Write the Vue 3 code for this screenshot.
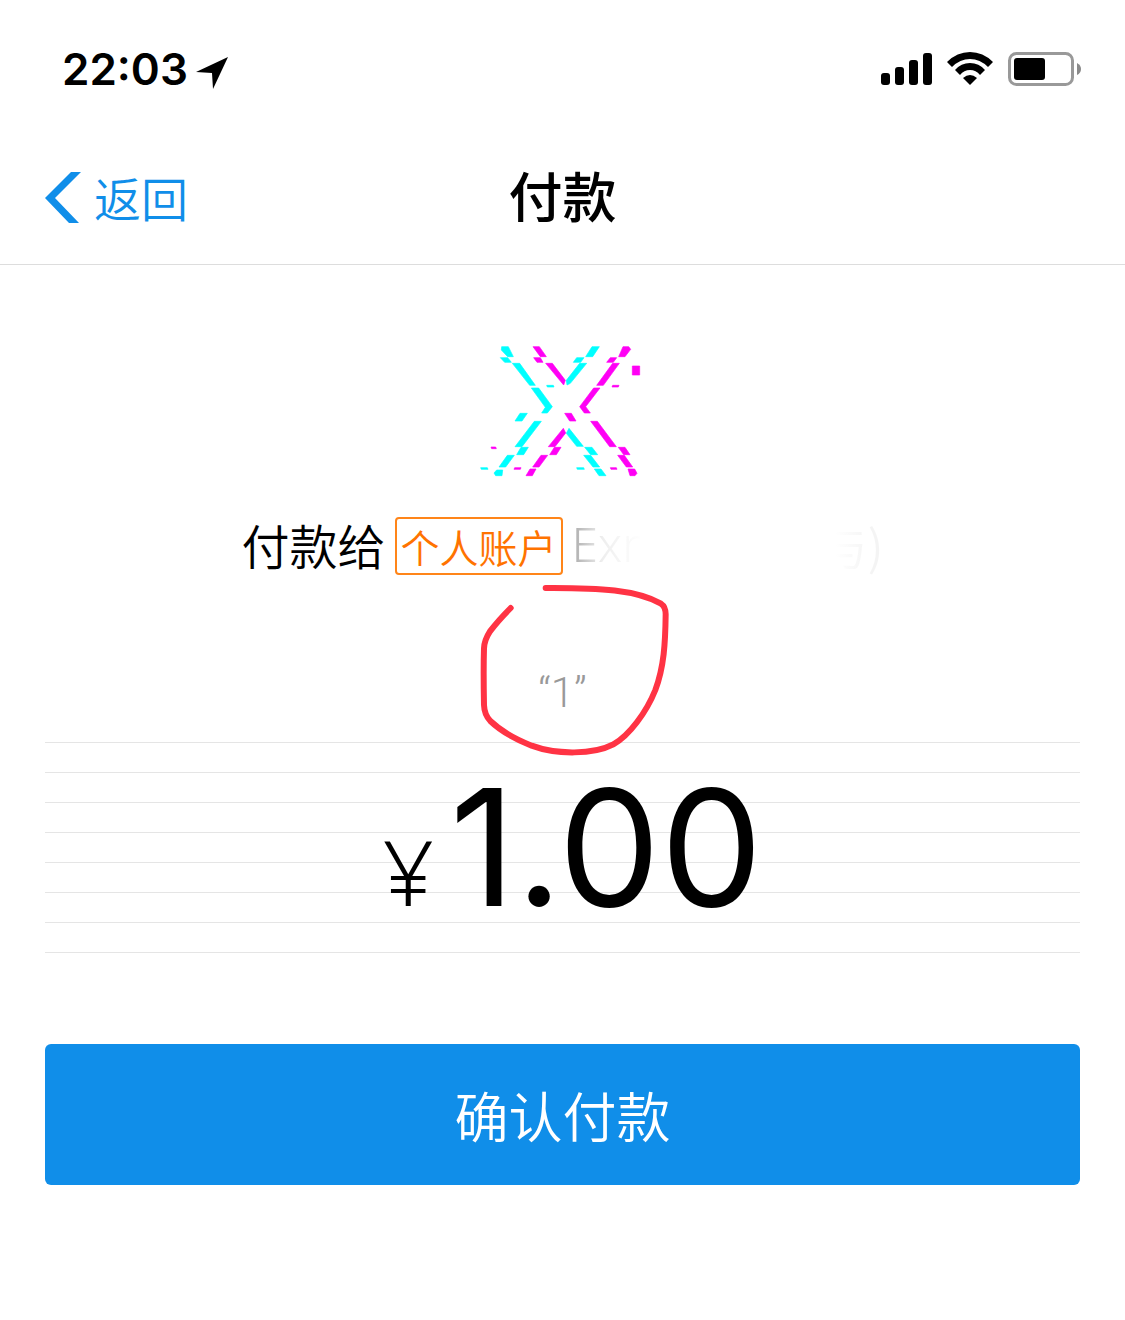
<script setup>
const cyan = [
  '95,50 115,50 130,80 113,80 94,60',
  '91,83 113,83 124,97 104,97',
  '127,100 149,100 196,166 179,166',
  '184,174 206,174 247,230 232,249 215,249 226,232',
  '366,50 388,50 368,80 347,80',
  '320,83 342,83 332,97 310,97',
  '329,100 350,100 301,160 291,165 289,151',
  '230,166 250,166 252,171 232,171',
  '150,250 172,250 156,273 135,273',
  '193,274 214,274 156,350 135,350',
  '153,352 175,352 161,374 140,374',
  '112,376 133,376 107,411 87,411',
  '80,420 98,420 96,437 77,437 72,429',
  '32,413 52,413 54,418 34,418',
  '289,310 297,295 340,349 320,349',
  '344,352 366,352 383,374 362,374',
  '341,376 362,376 389,411 369,411',
  '373,417 393,417 408,437 387,437',
  '320,413 341,413 343,418 322,418'
]
const magenta = [
  '189,50 208,50 229,80 211,80',
  '191,83 211,83 219,97 201,97',
  '227,100 247,100 286,151 281,165',
  '459,50 476,50 482,58 465,80 446,80',
  '421,83 440,83 430,97 410,97',
  '428,100 448,100 400,166 380,166',
  '428,166 447,166 445,171 426,171',
  '371,174 390,174 347,230 361,249 343,249 329,230',
  '487,108 509,108 509,135 487,135',
  '284,250 304,250 318,273 299,273',
  '362,274 382,274 439,350 419,350',
  '445,352 465,352 480,374 461,374',
  '443,376 463,376 488,411 469,411',
  '474,417 494,417 501,430 495,437 480,437',
  '63,351 77,351 79,356 65,356',
  '280,295 287,309 255,350 235,350',
  '253,352 273,352 259,374 239,374',
  '213,376 233,376 207,411 188,411',
  '180,417 198,417 187,437 168,437',
  '134,413 153,413 151,418 132,418',
  '421,413 439,413 441,418 423,418'
]
</script>

<template>
  <div class="page">
    <div class="status">
      <div class="clock">
        <span>22:03</span>
        <svg width="32" height="32" viewBox="0 0 32 32"><path d="M32 0 17 32 16 16 0 15Z" /></svg>
      </div>
      <div class="signals">
        <svg width="52" height="34" viewBox="0 0 52 34">
          <rect x="1" y="21" width="9" height="12" rx="3" />
          <rect x="15" y="15" width="9" height="18" rx="3" />
          <rect x="29" y="8" width="9" height="25" rx="3" />
          <rect x="43" y="1" width="9" height="32" rx="3" />
        </svg>
        <svg width="46" height="34" viewBox="0 0 46 34">
          <path d="M0 10Q10 0 23 0T46 10L41 15Q33 7 23 7T5 15Z" />
          <path d="M8 18Q14 11 23 11T38 18L33 23Q29 18 23 18T13 23Z" />
          <path d="M16 26Q23 20 30 26L23 33Z" />
        </svg>
        <svg width="73" height="34" viewBox="0 0 73 34">
          <rect x="1.5" y="1.5" width="63" height="31" rx="7" fill="none" stroke="#999" stroke-width="3" />
          <rect x="6" y="6" width="31" height="22" rx="3" />
          <path d="M69 11Q73 13 73 17T69 23Z" fill="#8a8a8a" />
        </svg>
      </div>
    </div>

    <header class="nav">
      <a class="back" href="#">
        <svg width="36" height="52" viewBox="0 0 36 52"><path d="M26 1H36L10 27 34 52H24L0 27Z" fill="#108ee9" /></svg>
        <span>返回</span>
      </a>
      <h1>付款</h1>
    </header>

    <main>
      <svg class="logo" width="190" height="160" viewBox="-6 0 570 480">
        <g fill="#00ffff" stroke="#00ffff"><polygon v-for="p in cyan" :key="p" :points="p" /></g>
        <g fill="#ff00f5" stroke="#ff00f5"><polygon v-for="p in magenta" :key="p" :points="p" /></g>
      </svg>

      <div class="payee">
        <span>付款给</span>
        <span class="tag">个人账户</span>
        <span class="name"><span class="first">Exr</span><span class="last">与)</span></span>
      </div>

      <div class="memo">
        <span>“1”</span>
        <svg class="circle" width="210" height="200" viewBox="0 0 630 600">
          <path d="M227 54C390 53 500 60 573 101Q587 110 587 133C586 220 582 290 556 360C530 425 478 497 430 523C370 554 260 555 185 527C130 505 90 481 61 453Q43 434 42 405Q40 300 42 235Q43 210 60 184C78 160 98 138 122 114" />
        </svg>
      </div>

      <div class="amount">
        <span class="currency">¥</span>
        <span class="value">1.00</span>
      </div>

      <button class="confirm" type="button">确认付款</button>
    </main>
  </div>
</template>

<style>
body {
  margin: 0;
  background: #fff;
}
</style>

<style scoped>
.page {
  font-family: "Noto Sans CJK SC", sans-serif;
  font-weight: 350;
  color: #000;
  background: #fff;
}
svg {
  display: block;
  flex: none;
}
.status {
  display: flex;
  justify-content: space-between;
  align-items: center;
  height: 138px;
  box-sizing: border-box;
  padding: 0 44px 0 62px;
}
.clock {
  display: flex;
  align-items: flex-end;
  gap: 8px;
  font: 600 44px/40px Inter, sans-serif;
}
.signals {
  display: flex;
  align-items: center;
  gap: 15px;
}
.nav {
  display: grid;
  grid-template-columns: 1fr auto 1fr;
  align-items: center;
  height: 127px;
  box-sizing: border-box;
  padding: 0 45px 8px;
  border-bottom: 1px solid #ddd;
}
.back {
  display: flex;
  align-items: center;
  gap: 13px;
  color: #108ee9;
  font-size: 47px;
  line-height: 60px;
  text-decoration: none;
}
h1 {
  margin: 0;
  padding-bottom: 4px;
  font-size: 54px;
  line-height: 72px;
  font-weight: 500;
}
main {
  padding: 65px 45px 135px;
}
.logo {
  margin: 0 auto;
  stroke-width: 2;
}
.payee {
  display: flex;
  justify-content: center;
  gap: 9px;
  margin-top: 27px;
  font-size: 48px;
  line-height: 54px;
}
.tag {
  box-sizing: border-box;
  height: 58px;
  padding: 0 4px;
  border: 2px solid #ff8519;
  border-radius: 4px;
  color: #ff7300;
  font-size: 39px;
}
.name {
  display: flex;
  justify-content: space-between;
  width: 312px;
}
.first,
.last {
  color: transparent;
  background-clip: text;
}
.first {
  font-family: "Noto Sans", sans-serif;
  font-weight: 300;
  background-image: linear-gradient(90deg, #aaa, #eee 30px, #fff 70px);
}
.last {
  background-image: linear-gradient(90deg, #fff 15px, #f4f4f4 50px);
}
.memo {
  position: relative;
  height: 167px;
  box-sizing: border-box;
  padding-top: 88px;
  text-align: center;
  color: #999;
  font-family: Roboto, sans-serif;
  font-weight: 300;
  font-size: 42px;
  line-height: 60px;
}
.circle {
  position: absolute;
  top: -5px;
  left: calc(50% - 93px);
}
.circle path {
  fill: none;
  stroke: #ff3344;
  stroke-width: 18;
  stroke-linecap: round;
  stroke-linejoin: round;
}
.amount {
  display: flex;
  justify-content: center;
  align-items: baseline;
  gap: 16px;
  height: 211px;
  box-sizing: border-box;
  padding-left: 20px;
  background: repeating-linear-gradient(#e5e5e5 0 1px, transparent 1px 30px);
  line-height: 211px;
}
.currency {
  font-family: "Noto Sans", sans-serif;
  font-weight: 350;
  font-size: 90px;
}
.value {
  font-family: Inter, sans-serif;
  font-weight: 400;
  font-size: 162px;
}
.confirm {
  display: block;
  width: 100%;
  height: 141px;
  margin-top: 91px;
  padding: 0;
  border: 0;
  border-radius: 6px;
  background: #108ee9;
  color: #fff;
  font: inherit;
  font-size: 54px;
}
</style>
